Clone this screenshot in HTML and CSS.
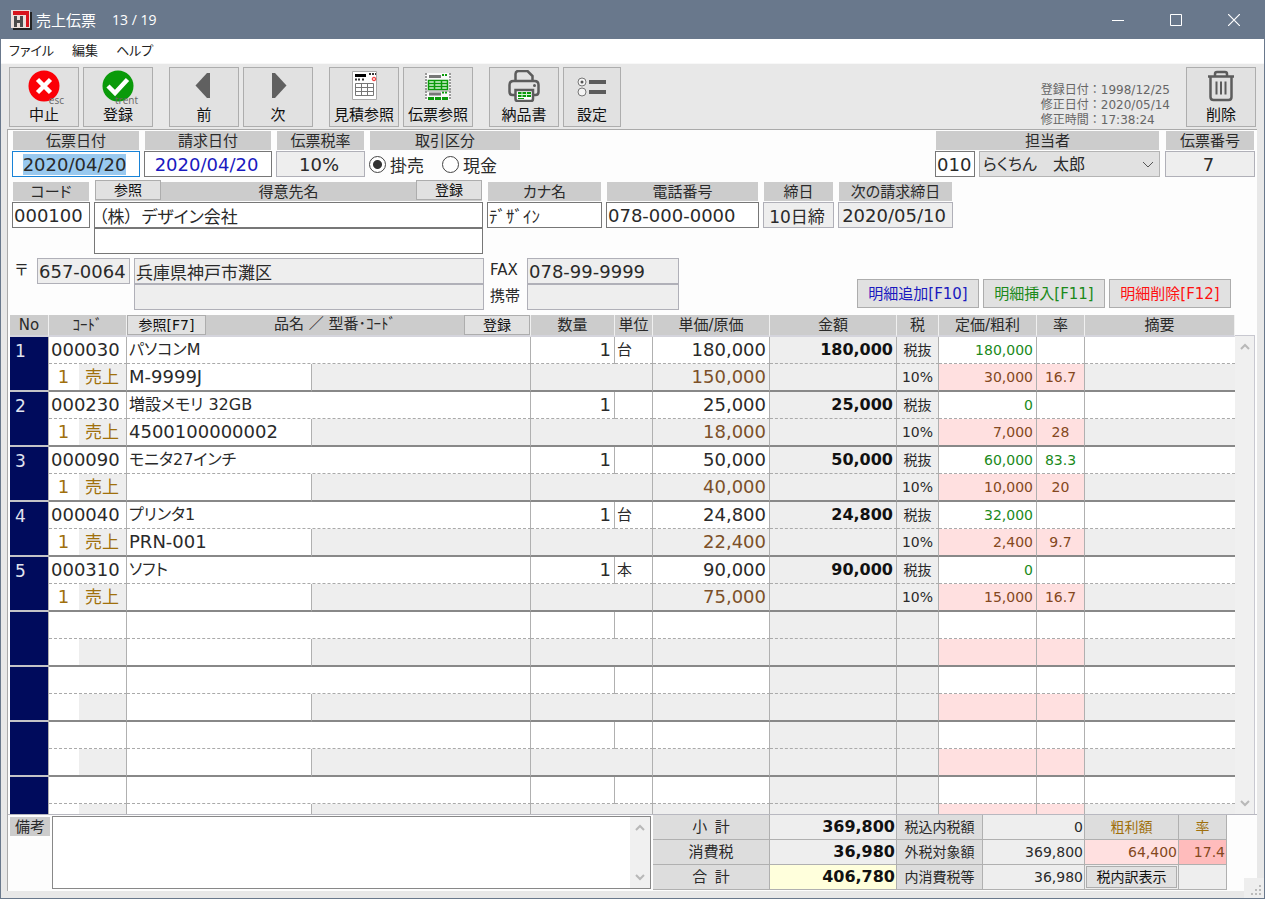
FILE: index.html
```html
<!DOCTYPE html>
<html lang="ja">
<head>
    <meta charset="UTF-8">
    <meta name="viewport" content="width=device-width, initial-scale=1.0">
    <title>売上伝票</title>
    <link rel="stylesheet" href="styles.css">
</head>
<body>
    <div class="window">
        <div class="titlebar">
            <svg class="app-icon" width="21" height="20" viewBox="0 0 21 20">
                <path d="M2 2h19v18H2z" fill="#222"/>
                <path d="M0 0h19v18H0z" fill="#ece0dc"/>
                <path d="M2 1h16v16h-3V5H2z" fill="#d8141c"/>
                <path d="M3 6h3v4h3V6h3v11H9v-4H6v4H3z" fill="#4c4c4c"/>
            </svg>
            <span class="title">売上伝票</span>
            <span class="title">13 / 19</span>
            <div class="window-buttons">
                <button aria-label="最小化"><svg width="12" height="12"><path d="M0 6.500h12" stroke="#fff"/></svg></button>
                <button aria-label="最大化"><svg width="12" height="12"><path d="M.5.5h11v11H.5z" fill="none" stroke="#fff"/></svg></button>
                <button aria-label="閉じる"><svg width="12" height="12"><path d="M0 0l12 12M12 0L0 12" stroke="#fff" stroke-width="1.200"/></svg></button>
            </div>
        </div>

        <div class="menubar">
            <a href="#file">ファイル</a>
            <a href="#edit">編集</a>
            <a href="#help">ヘルプ</a>
        </div>

        <div class="toolbar">
            <div class="tool-group">
                <button class="tool">
                    <svg width="32" height="32" viewBox="0 0 32 32"><circle cx="16" cy="16" r="15.500" fill="#fb0007"/><path d="M9.500 9.500l13 13M22.500 9.500l-13 13" stroke="#fff" stroke-width="4.500"/></svg>
                    <span class="key">esc</span>
                    中止
                </button>
                <button class="tool">
                    <svg width="32" height="32" viewBox="0 0 32 32"><circle cx="16" cy="16" r="15.500" fill="#0a9a0a"/><path d="M6 16l7 7L25.500 9.500" fill="none" stroke="#fff" stroke-width="4.500"/></svg>
                    <span class="key">trent</span>
                    登録
                </button>
            </div>
            <div class="tool-group">
                <button class="tool">
                    <svg width="32" height="32" viewBox="0 0 32 32"><path d="M22 3v25h-3L7.500 15.500 19 3z" fill="#606060"/></svg>
                    前
                </button>
                <button class="tool">
                    <svg width="32" height="32" viewBox="0 0 32 32"><path d="M10 3v25h3l11.500-12.500L13 3z" fill="#606060"/></svg>
                    次
                </button>
            </div>
            <div class="tool-group">
                <button class="tool">
                    <svg width="32" height="32" viewBox="0 0 32 32">
                        <path d="M4.500 1.500h24v28h-24z" fill="#fff" stroke="#aaa"/>
                        <path d="M7 5.500h11" stroke="#000" stroke-width="3"/>
                        <path d="M21 4h7M7 9.500h5M14 9.500h3" stroke="#333" stroke-width="2" stroke-dasharray="2 1"/>
                        <circle cx="26" cy="9" r="1.800" fill="#fbb" stroke="#e33"/>
                        <path d="M7.500 13.500h18v12h-18zM7.500 17.500h18M7.500 21.500h18M13.500 13.500v12M19.500 13.500v12" fill="none" stroke="#777"/>
                    </svg>
                    見積参照
                </button>
                <button class="tool">
                    <svg width="32" height="32" viewBox="0 0 32 32">
                        <path d="M3 3h26v27H3z" fill="#f8f8f8"/>
                        <path d="M4 3v27M28 3v27" stroke="#999" stroke-width="2" stroke-dasharray="2 1"/>
                        <path d="M7 6.500h12M7 24h12" stroke="#777" stroke-width="3"/>
                        <path d="M20 5h6M20 22.500h6" stroke="#0a9a0a" stroke-width="2" stroke-dasharray="2 1"/>
                        <path d="M6.500 10.500h19v9h-19zM6.500 13.500h19M6.500 16.500h19M12.500 10v9M19.500 10v9" fill="#d8f4d8" stroke="#0a9a0a" stroke-width="1.500"/>
                        <path d="M3 21h26" stroke="#999"/>
                        <path d="M6 28.500h20" stroke="#0a9a0a" stroke-width="3" stroke-dasharray="6 1"/>
                    </svg>
                    伝票参照
                </button>
            </div>
            <div class="tool-group">
                <button class="tool">
                    <svg width="32" height="32" viewBox="0 0 32 32">
                        <path d="M7.500 11V4q0-3 3-3h9l5 5v5M7 25H4.500q-3 0-3-3v-7q0-4 4-4h21q4 0 4 4v7q0 3-3 3H25" fill="none" stroke="#5c5c5c" stroke-width="2.500"/>
                        <path d="M7.500 20h17.500v9q0 2-2 2h-13.500q-2 0-2-2z" fill="#fff" stroke="#5c5c5c" stroke-width="2.500"/>
                        <path d="M10 22h13v5H10z" fill="#0a9a0a"/><path d="M10 24.500h13M14 22v5M18.500 22v5" stroke="#d8f4d8"/>
                        <path d="M10 28.500h6" stroke="#0a9a0a"/><circle cx="26.500" cy="15.500" r="1.500" fill="#5c5c5c"/>
                    </svg>
                    納品書
                </button>
                <button class="tool narrow">
                    <svg width="32" height="32" viewBox="0 0 32 32">
                        <circle cx="6" cy="12" r="4" fill="#f4f4f4" stroke="#777"/><circle cx="6" cy="12" r="1.500" fill="#555"/>
                        <circle cx="6" cy="22" r="4" fill="#f4f4f4" stroke="#777"/>
                        <path d="M13 12h17M13 22h17" stroke="#5c5c5c" stroke-width="4"/>
                    </svg>
                    設定
                </button>
            </div>
            <div class="stamps">
                <div>登録日付：1998/12/25</div>
                <div>修正日付：2020/05/14</div>
                <div>修正時間：17:38:24</div>
            </div>
            <button class="tool">
                <svg width="32" height="32" viewBox="0 0 32 32" fill="none" stroke="#5c5c5c" stroke-width="2.500">
                    <path d="M3 6.500h26M10 6V4q0-2 2-2h8q2 0 2 2v2M5.500 7v20q0 3 3 3h15q3 0 3-3V7"/>
                    <path d="M11.500 11.500v13M16 11.500v13M20.500 11.500v13" stroke-width="2"/>
                </svg>
                削除
            </button>
        </div>

        <div class="panel">
            <div class="form-row">
                <div class="group w-date">
                    <label class="caption" for="slip-date">伝票日付</label>
                    <input class="field center" id="slip-date" value="2020/04/20">
                </div>
                <div class="group w-date">
                    <label class="caption" for="bill-date">請求日付</label>
                    <input class="field center blue" id="bill-date" value="2020/04/20">
                </div>
                <div class="group w-rate">
                    <label class="caption" for="tax-rate">伝票税率</label>
                    <input class="field center" id="tax-rate" value="10%" readonly>
                </div>
                <div class="group w-type">
                    <span class="caption">取引区分</span>
                    <div class="radios">
                        <label><input type="radio" name="type" checked>掛売</label>
                        <label><input type="radio" name="type">現金</label>
                    </div>
                </div>
                <div class="group w-staff">
                    <label class="caption" for="staff">担当者</label>
                    <div class="pair">
                        <input class="field staff-code" aria-label="担当者コード" value="010">
                        <div class="select-box">
                            <select id="staff"><option>らくちん&#8195;太郎</option></select>
                            <svg width="12" height="8" viewBox="0 0 12 8"><path d="M1 1l5 5 5-5" fill="none" stroke="#555"/></svg>
                        </div>
                    </div>
                </div>
                <div class="group w-no">
                    <label class="caption" for="slip-no">伝票番号</label>
                    <input class="field center" id="slip-no" value="7" readonly>
                </div>
            </div>

            <div class="form-row">
                <div class="group w-code">
                    <label class="caption" for="cust-code">コード</label>
                    <input class="field" id="cust-code" value="000100">
                </div>
                <div class="group w-name">
                    <div class="caption with-buttons">
                        <button class="small">参照</button>
                        <label for="cust-name">得意先名</label>
                        <button class="small">登録</button>
                    </div>
                    <input class="field jp indent" id="cust-name" value="（株）&#8194;デザイン会社">
                    <input class="field" aria-label="得意先名2">
                </div>
                <div class="group w-kana">
                    <label class="caption" for="kana">カナ名</label>
                    <input class="field jp" id="kana" value="ﾃﾞｻﾞｲﾝ">
                </div>
                <div class="group w-tel">
                    <label class="caption" for="tel">電話番号</label>
                    <input class="field" id="tel" value="078-000-0000">
                </div>
                <div class="group w-close">
                    <label class="caption" for="close-day">締日</label>
                    <input class="field center jp" id="close-day" value="10日締" readonly>
                </div>
                <div class="group w-next">
                    <label class="caption" for="next-close">次の請求締日</label>
                    <input class="field center" id="next-close" value="2020/05/10" readonly>
                </div>
            </div>

            <div class="form-row address-row">
                <label class="side w-post-mark" for="zip">〒</label>
                <input class="field w-zip" id="zip" value="657-0064" readonly>
                <div class="group w-address">
                    <input class="field jp" aria-label="住所1" value="兵庫県神戸市灘区" readonly>
                    <input class="field" aria-label="住所2" readonly>
                </div>
                <div class="phones">
                    <label class="side" for="fax">FAX</label>
                    <input class="field" id="fax" value="078-99-9999" readonly>
                    <label class="side" for="mobile">携帯</label>
                    <input class="field" id="mobile" readonly>
                </div>
                <div class="line-buttons">
                    <button class="blue">明細追加[F10]</button>
                    <button class="green">明細挿入[F11]</button>
                    <button class="red">明細削除[F12]</button>
                </div>
            </div>

            <div class="list">
                <div class="table-clip">
                    <table class="lines">
                        <colgroup>
                            <col class="c-no"><col class="c-div"><col class="c-kind"><col class="c-model"><col class="c-rest">
                            <col class="c-qty"><col class="c-unit"><col class="c-price"><col class="c-amount"><col class="c-tax">
                            <col class="c-list"><col class="c-rate"><col class="c-note">
                        </colgroup>
                        <thead>
                            <tr>
                                <th>No</th>
                                <th colspan="2">ｺｰﾄﾞ</th>
                                <th colspan="2">
                                    <div class="with-buttons">
                                        <button class="small wide">参照[F7]</button>
                                        <span>品名 ／ 型番･ｺｰﾄﾞ</span>
                                        <button class="small">登録</button>
                                    </div>
                                </th>
                                <th>数量</th>
                                <th>単位</th>
                                <th>単価/原価</th>
                                <th>金額</th>
                                <th>税</th>
                                <th>定価/粗利</th>
                                <th>率</th>
                                <th>摘要</th>
                            </tr>
                        </thead>
                    </table>
                </div>
                <div class="scrollbar">
                    <svg width="10" height="7" viewBox="0 0 10 7"><path d="M1 6l4-4 4 4" fill="none" stroke="#b8b8b8" stroke-width="2"/></svg>
                    <svg width="10" height="7" viewBox="0 0 10 7"><path d="M1 1l4 4 4-4" fill="none" stroke="#b8b8b8" stroke-width="2"/></svg>
                </div>
            </div>

            <div class="footer">
                <label class="caption memo-label" for="memo">備考</label>
                <div class="memo">
                    <textarea id="memo"></textarea>
                    <div class="scrollbar">
                        <svg width="10" height="7" viewBox="0 0 10 7"><path d="M1 6l4-4 4 4" fill="none" stroke="#b8b8b8" stroke-width="2"/></svg>
                        <svg width="10" height="7" viewBox="0 0 10 7"><path d="M1 1l4 4 4-4" fill="none" stroke="#b8b8b8" stroke-width="2"/></svg>
                    </div>
                </div>
                <table class="totals">
                    <colgroup><col class="t-name"><col class="t-sum"><col class="t-tax"><col class="t-value"><col class="t-profit"><col class="t-rate"></colgroup>
                    <tr>
                        <th>小&#8194;計</th><td class="sum">369,800</td>
                        <th>税込内税額</th><td>0</td>
                        <th class="gold">粗利額</th><th class="gold">率</th>
                    </tr>
                    <tr>
                        <th>消費税</th><td class="sum">36,980</td>
                        <th>外税対象額</th><td>369,800</td>
                        <td class="pink">64,400</td><td class="deep-pink">17.4</td>
                    </tr>
                    <tr>
                        <th>合&#8194;計</th><td class="sum total">406,780</td>
                        <th>内消費税等</th><td>36,980</td>
                        <td class="button-cell"><button class="small">税内訳表示</button></td><td></td>
                    </tr>
                </table>
            </div>
        </div>
        <svg class="grip" width="20" height="20" viewBox="0 0 20 20"><path d="M15 7h2v2h-2zM15 11h2v2h-2zM11 11h2v2h-2zM15 15h2v2h-2zM11 15h2v2h-2zM7 15h2v2H7z" fill="#bbb"/></svg>
    </div>
    <script src="script.js"></script>
</body>
</html>
```

FILE: styles.css
```css
* {
    box-sizing: border-box;
}

body {
    margin: 0;
    font-family: "DejaVu Sans", "Noto Sans CJK JP", sans-serif;
    font-size: 15px;
    color: #2a2a2a;
    font-feature-settings: "palt";
}

button, input, select, textarea {
    font: inherit;
    font-feature-settings: inherit;
    color: inherit;
    margin: 0;
    border-radius: 0;
}

button {
    background: #e1e1e1;
    border: 1px solid #adadad;
    padding: 0;
    white-space: nowrap;
}

.window {
    position: relative;
    display: flex;
    flex-direction: column;
    height: 100vh;
    border: 1px solid #69788c;
    border-top: none;
    background: #e8e8e8;
}

/* title and menu */
.titlebar {
    display: flex;
    align-items: center;
    height: 39px;
    padding-left: 10px;
    background: #69788c;
    color: #fff;
    font-family: "Open Sans", "Noto Sans CJK JP", sans-serif;
    font-feature-settings: normal;
}

.title {
    margin-left: 4px;
}

.title + .title {
    margin-left: 16px;
    font-size: 14px;
}

.window-buttons {
    display: flex;
    margin-left: auto;
    padding-right: 1px;
}

.window-buttons button {
    width: 58px;
    height: 38px;
    background: none;
    border: none;
}

.menubar {
    display: flex;
    gap: 18px;
    height: 24px;
    padding-left: 8px;
    background: #fff;
    line-height: 24px;
    font-size: 13px;
}

.menubar a {
    color: #222;
    text-decoration: none;
}

/* toolbar */
.toolbar {
    display: flex;
    gap: 16px;
    height: 66px;
    padding: 3px 8px 2px;
    border-top: 1px solid #f8f8f8;
}

.tool-group {
    display: flex;
    gap: 4px;
}

.tool {
    position: relative;
    display: flex;
    flex-direction: column;
    align-items: center;
    justify-content: space-between;
    width: 70px;
    height: 60px;
    padding: 2px 0 0;
    line-height: 22px;
    color: #111;
}

.tool.narrow {
    width: 58px;
}

.key {
    position: absolute;
    right: 14px;
    top: 25px;
    line-height: 14px;
    font-family: "Open Sans", sans-serif;
    font-size: 10px;
    color: #666;
}

.stamps {
    margin-left: auto;
    padding-top: 16px;
    font-size: 12px;
    line-height: 15px;
    color: #666;
    font-feature-settings: normal;
}

/* slip header */
.panel {
    flex: 1;
    min-height: 0;
    display: flex;
    flex-direction: column;
    margin: 0 7px 7px 6px;
    border-top: 1px solid #aaa;
    border-left: 1px solid #aaa;
    background: #fdfdfd;
}

.form-row {
    display: flex;
    gap: 4px;
    padding: 1px 2px 4px 4px;
}

.caption {
    display: block;
    height: 20px;
    margin: 0 1px;
    line-height: 20px;
    text-align: center;
    background: #ccc;
    border-bottom: 1px solid #fdfdfd;
}

.with-buttons {
    display: flex;
    justify-content: space-between;
}

.caption.with-buttons .small {
    margin-top: -2px;
}

.small {
    width: 66px;
    height: 20px;
    line-height: 16px;
    font-size: 14px;
    color: #111;
}

.field {
    display: block;
    width: 100%;
    height: 26px;
    padding: 0 1px;
    border: 1px solid #777;
    background: #fff;
    font-size: 18px;
    outline: none;
}

.field[readonly] {
    background: #eee;
    border: 1px solid #b0b0b8;
}

.field.jp {
    font-size: 17px;
}

.field.indent {
    padding-left: 4px;
}

.field.center {
    padding: 0 3px 0 0;
    text-align: center;
}

.field:focus {
    border-color: #1883d7;
}

.field::selection {
    color: #2a2a2a;
    background: #99c9ef;
}

.blue {
    color: #1a1abf;
}

.green {
    color: #1b8a1b;
}

.red {
    color: #f11;
}

.w-date { width: 128px; }
.w-rate { width: 89px; }
.w-type { width: 152px; }
.w-staff { width: 225px; margin-left: auto; }
.w-no { width: 90px; margin-left: 1px; }
.w-code { width: 78px; }
.w-name { width: 389px; }
.w-kana { width: 115px; }
.w-tel { width: 153px; }
.w-close { width: 71px; }
.w-next { width: 115px; }

.radios {
    display: flex;
    gap: 18px;
    height: 26px;
    font-size: 17px;
}

.radios label {
    display: flex;
    align-items: center;
    gap: 4px;
}

.radios input {
    appearance: none;
    width: 17px;
    height: 17px;
    border: 1px solid #444;
    border-radius: 50%;
    background: #fff;
}

.radios input:checked {
    background: radial-gradient(circle, #333 4px, #fff 5px);
}

.pair {
    display: flex;
    gap: 4px;
}

.staff-code {
    width: 40px;
}

.select-box {
    position: relative;
    flex: 1;
}

.select-box select {
    appearance: none;
    width: 100%;
    height: 26px;
    padding: 0 3px;
    border: 1px solid #b4b4b4;
    background: #e1e1e1;
    font-size: 16px;
}

.select-box svg {
    position: absolute;
    right: 6px;
    top: 10px;
}

.address-row {
    padding-top: 0;
    padding-bottom: 5px;
}

.side {
    line-height: 24px;
    font-size: 15px;
}

.w-post-mark { width: 21px; padding-left: 3px; }
.w-zip { width: 93px; }
.w-address { width: 350px; }

.phones {
    display: grid;
    grid-template-columns: 37px 152px;
    padding-left: 2px;
}

.line-buttons {
    display: flex;
    gap: 4px;
    margin-left: auto;
    padding-right: 24px;
    align-items: flex-end;
    padding-bottom: 2px;
}

.line-buttons button {
    width: 122px;
    height: 29px;
    padding-bottom: 2px;
    font-size: 15px;
}

/* slip lines */
.list {
    flex: 1;
    min-height: 0;
    display: flex;
    padding: 0 2px;
    border-bottom: 1px solid #b8b8c0;
}

.table-clip {
    flex: 1;
    overflow: hidden;
}

.lines {
    width: 100%;
    table-layout: fixed;
    border-collapse: separate;
    border-spacing: 0;
}

.c-no { width: 39px; }
.c-div { width: 30px; }
.c-kind { width: 48px; }
.c-model { width: 185px; }
.c-qty { width: 84px; }
.c-unit { width: 38px; }
.c-price { width: 117px; }
.c-amount { width: 127px; }
.c-tax { width: 42px; }
.c-list { width: 98px; }
.c-rate { width: 48px; }
.c-note { width: 150px; }

.lines thead th {
    height: 22px;
    padding: 0;
    line-height: 19px;
    font-weight: normal;
    background: #ccc;
    border-right: 1px solid #f0f0f0;
    border-bottom: 2px solid #d4d4dc;
}

.lines td, .lines tbody th {
    height: 27px;
    padding: 0 3px 0 2px;
    overflow: hidden;
    white-space: nowrap;
    line-height: 26px;
    font-size: 18px;
    border-right: 1px solid #b0b0b0;
    border-bottom: 1px dashed #aaa;
    background: #fff;
}

.lines .second td {
    height: 28px;
    border-bottom: 2px solid #888;
    background: #eee;
}

.lines tbody th {
    padding: 1px 5px;
    vertical-align: top;
    text-align: left;
    font-size: 17px;
    font-weight: normal;
    color: #e0e4f0;
    background: #000b5c;
    border-bottom: 2px solid #c4c4c8;
}

.lines td:last-child {
    border-right: none;
}

.lines .name {
    font-size: 16px;
}

.lines .num {
    text-align: right;
}

.lines .unit {
    font-size: 15px;
}

.lines .amount {
    text-align: right;
    font-size: 16px;
    font-weight: bold;
    color: #111;
    background: #eee;
}

.lines .tax {
    padding: 0;
    text-align: center;
    font-size: 14px;
    background: #eee;
}

.lines .profit, .lines .rate {
    font-size: 14px;
}

.lines .green {
    color: #1b8a1b;
}

.lines .rate {
    padding: 0;
    text-align: center;
}

.lines .second .profit, .lines .second .rate {
    background: #ffe0e0;
    color: #844820;
}

.lines .second .div, .lines .second .model {
    background: #fff;
}

.lines .second .div {
    text-align: center;
    border-right: none;
    color: #a0700c;
}

.lines .second .kind {
    font-size: 17px;
    padding-left: 6px;
    color: #a0700c;
}

.lines .cost {
    color: #7c5028;
}

.scrollbar {
    display: flex;
    flex-direction: column;
    justify-content: space-between;
    align-items: center;
    width: 20px;
    padding: 7px 0;
    background: #f0f0f0;
}

.list > .scrollbar {
    margin-top: 20px;
    border-top: 1px solid #c8c8d0;
    border-right: 1px solid #c8c8d0;
}

/* memo and totals */
.footer {
    display: flex;
    padding: 0 30px 1px 2px;
}

.memo-label {
    width: 40px;
    margin: 2px 2px 0 0;
}

.memo {
    flex: 1;
    display: flex;
    height: 73px;
    margin: 1px 2px 0 0;
    border: 1px solid #888;
}

.memo textarea {
    flex: 1;
    border: none;
    outline: none;
    resize: none;
    background: #fff;
}

.totals {
    width: 574px;
    table-layout: fixed;
    border-collapse: separate;
    border-spacing: 0;
}

.t-name { width: 117px; }
.t-sum { width: 127px; }
.t-tax { width: 86px; }
.t-value { width: 102px; }
.t-profit { width: 94px; }
.t-rate { width: 48px; }

.totals th, .totals td {
    height: 25px;
    padding: 0 1px;
    line-height: 24px;
    white-space: nowrap;
    border-right: 1px solid #b0b0b0;
    border-bottom: 1px solid #b0b0b0;
}

.totals th {
    font-weight: normal;
    background: #ddd;
}

.totals th:nth-child(3) {
    font-size: 14px;
}

.totals td {
    font-size: 14px;
    text-align: right;
    background: #eee;
}

.totals .sum {
    font-size: 16px;
    font-weight: bold;
    color: #111;
}

.totals .total {
    background: #ffffdc;
}

.totals .gold {
    font-size: 14px;
    color: #a0700c;
}

.totals .pink {
    background: #ffe0e0;
    color: #844820;
}

.totals .deep-pink {
    background: #ffbcbc;
    color: #844820;
}

.totals .button-cell {
    text-align: center;
}

.totals .small {
    display: block;
    width: 100%;
    height: 22px;
}

.small.wide {
    width: 79px;
}

.grip {
    position: absolute;
    right: 0;
    bottom: 0;
    background: #eee;
}
```

FILE: script.js
```js
const items = [
    { code: "000030", name: "パソコンM", model: "M-9999J", unit: "台", price: "180,000", cost: "150,000", list: "180,000", profit: "30,000", listRate: "", rate: "16.7" },
    { code: "000230", name: "増設メモリ 32GB", model: "4500100000002", unit: "", price: "25,000", cost: "18,000", list: "0", profit: "7,000", listRate: "", rate: "28" },
    { code: "000090", name: "モニタ27インチ", model: "", unit: "", price: "50,000", cost: "40,000", list: "60,000", profit: "10,000", listRate: "83.3", rate: "20" },
    { code: "000040", name: "プリンタ1", model: "PRN-001", unit: "台", price: "24,800", cost: "22,400", list: "32,000", profit: "2,400", listRate: "", rate: "9.7" },
    { code: "000310", name: "ソフト", model: "", unit: "本", price: "90,000", cost: "75,000", list: "0", profit: "15,000", listRate: "", rate: "16.7" },
];
const ROWS = 9;
const table = document.querySelector(".lines");

for (let i = 0; i < ROWS; i++) {
    const item = items[i];
    const v = (key) => (item ? item[key] : "");
    const fixed = (text) => (item ? text : "");
    const body = document.createElement("tbody");
    body.innerHTML = `
        <tr>
            <th rowspan="2">${fixed(i + 1)}</th>
            <td colspan="2">${v("code")}</td>
            <td colspan="2" class="name">${v("name")}</td>
            <td class="num">${fixed("1")}</td>
            <td class="unit">${v("unit")}</td>
            <td class="num">${v("price")}</td>
            <td class="amount">${v("price")}</td>
            <td class="tax">${fixed("税抜")}</td>
            <td class="num profit green">${v("list")}</td>
            <td class="rate green">${v("listRate")}</td>
            <td></td>
        </tr>
        <tr class="second">
            <td class="div">${fixed("1")}</td>
            <td class="kind">${fixed("売上")}</td>
            <td class="model">${v("model")}</td>
            <td></td>
            <td colspan="2"></td>
            <td class="num cost">${v("cost")}</td>
            <td></td>
            <td class="tax">${fixed("10%")}</td>
            <td class="num profit">${v("profit")}</td>
            <td class="rate">${v("rate")}</td>
            <td></td>
        </tr>`;
    table.appendChild(body);
}

// start on the slip date with its text selected
const slipDate = document.getElementById("slip-date");
slipDate.focus();
slipDate.select();
```
